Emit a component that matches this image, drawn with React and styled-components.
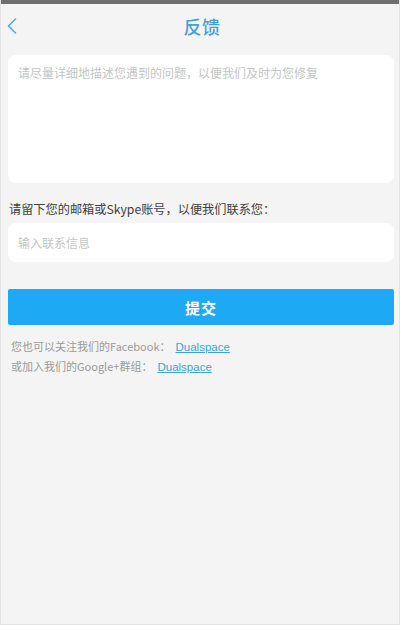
import React from 'react';
import styled, { createGlobalStyle } from 'styled-components';

const GlobalStyle = createGlobalStyle`
	html, body {
		margin: 0;
		padding: 0;
		background: #f4f4f4;
	}
	body {
		font-family: 'Noto Sans CJK SC', 'Liberation Sans', sans-serif;
	}
`;

const App = () => {
	return (
		<Page>
			<GlobalStyle />
			<StatusStrip />
			<Header>
				<BackButton>
					<svg width="10" height="16" viewBox="0 0 10 16">
						<path d="M8.5 1 L1.5 8 L8.5 15" fill="none" stroke="#5aa8d8" strokeWidth="1.6" strokeLinecap="round" strokeLinejoin="round" />
					</svg>
				</BackButton>
				<Title>反馈</Title>
			</Header>
			<Content>
				<Card $height="128px">
					<Placeholder>请尽量详细地描述您遇到的问题，以便我们及时为您修复</Placeholder>
				</Card>
				<Label>请留下您的邮箱或Skype账号，以便我们联系您：</Label>
				<Card $height="39px" $center>
					<Placeholder>输入联系信息</Placeholder>
				</Card>
				<SubmitButton>提交</SubmitButton>
				<Notes>
					<Note>
						您也可以关注我们的Facebook：<Link>Dualspace</Link>
					</Note>
					<Note>
						或加入我们的Google+群组：<Link>Dualspace</Link>
					</Note>
				</Notes>
			</Content>
		</Page>
	);
};

export default App;

const Page = styled.div`
	width: 400px;
	height: 625px;
	box-sizing: border-box;
	background: #f4f4f4;
	border-left: 1px solid #e4e4e4;
	border-right: 1px solid #e4e4e4;
	border-bottom: 1px solid #e4e4e4;
	overflow: hidden;
`;

const StatusStrip = styled.div`
	height: 4px;
	background: #6f6f6f;
`;

const Header = styled.div`
	position: relative;
	height: 43px;
	display: flex;
	align-items: center;
	justify-content: center;
`;

const BackButton = styled.button`
	position: absolute;
	left: 6px;
	top: 14px;
	border: none;
	background: transparent;
	padding: 0;
	display: flex;
`;

const Title = styled.div`
	margin-left: 4px;
	font-size: 18px;
	font-weight: 500;
	color: #45a0d4;
	letter-spacing: 0.5px;
`;

const Content = styled.div`
	padding: 8px 5px 0 7px;
	display: flex;
	flex-direction: column;
`;

const Card = styled.div`
	height: ${(p) => p.$height};
	background: #fff;
	border-radius: 8px;
	box-sizing: border-box;
	padding: ${(p) => (p.$center ? '0 10px' : '10px 10px')};
	display: flex;
	align-items: ${(p) => (p.$center ? 'center' : 'flex-start')};
`;

const Placeholder = styled.span`
	font-size: 12px;
	color: #c4c4c4;
	line-height: 16px;
`;

const Label = styled.div`
	margin: 18px 0 6px 1px;
	font-size: 12.2px;
	color: #404040;
	line-height: 16px;
`;

const SubmitButton = styled.button`
	margin-top: 27px;
	height: 36px;
	border: none;
	border-radius: 2px;
	background: #1ea9f5;
	color: #fff;
	font-family: inherit;
	font-size: 15px;
	font-weight: 700;
	letter-spacing: 1px;
`;

const Notes = styled.div`
	margin-top: 14px;
	padding-left: 3px;
	display: flex;
	flex-direction: column;
	gap: 5px;
`;

const Note = styled.div`
	font-size: 11px;
	line-height: 14px;
	color: #9a9a9a;
`;

const Link = styled.span`
	margin-left: 5px;
	color: #3aa3dc;
	text-decoration: underline;
	font-family: 'Liberation Sans', sans-serif;
	font-size: 11.5px;
	font-weight: 400;
`;
